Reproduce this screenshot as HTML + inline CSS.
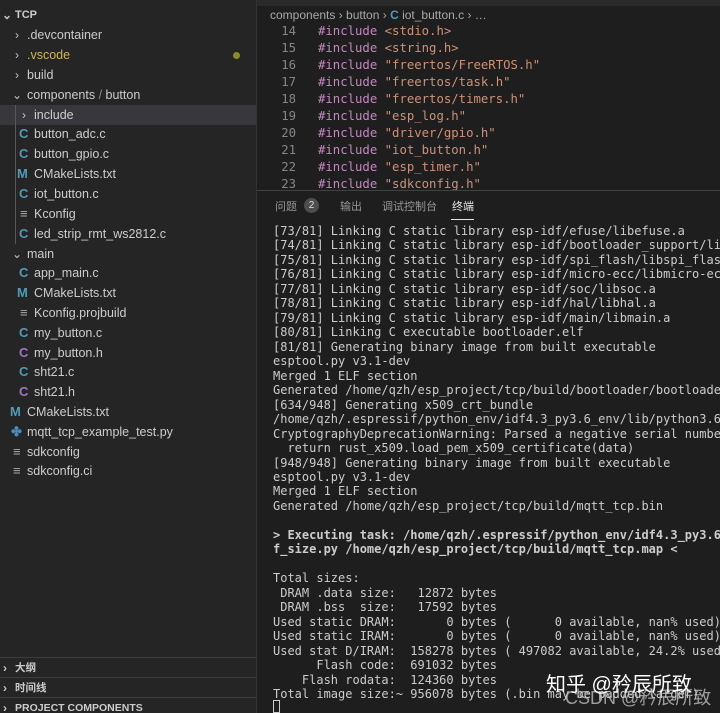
<!DOCTYPE html>
<html><head><meta charset="utf-8">
<style>
*{margin:0;padding:0;box-sizing:border-box}
html,body{width:720px;height:713px;overflow:hidden}
body{background:#1e1e1e;position:relative;font-family:"Liberation Sans","Noto Sans CJK SC",sans-serif;color:#cccccc}
.abs{position:absolute;white-space:pre}
#side{position:absolute;left:0;top:0;width:256px;height:713px;background:#252526;overflow:hidden}
.row{position:absolute;left:0;width:256px;height:20px;font-size:12.5px;line-height:20px;white-space:pre}
.ic{position:absolute;font-weight:bold;font-size:13px}
.c{color:#519aba}.h{color:#a074c4}.m{color:#519aba}
.chev{position:absolute;color:#c5c5c5;font-size:12px}
.mono{font-family:"DejaVu Sans Mono","Liberation Mono",monospace}
#code .l{position:absolute;font-size:12.3px;line-height:17px;white-space:pre}
.ln{color:#858585;width:40px;text-align:right;left:256px}
.kw{color:#c586c0}.st{color:#ce9178}
#termbox{position:absolute;left:257px;top:224px;width:463px;height:489px;overflow:hidden}
#term{position:absolute;left:16px;top:0;font-size:12px;line-height:14.47px;color:#cccccc;white-space:pre}
.sec{position:absolute;left:0;width:256px;height:20px;border-top:1px solid #3c3c3c;font-size:10.5px;font-weight:bold;line-height:20px;color:#cccccc}
</style></head><body>
<div class="abs" style="left:256px;top:0;width:464px;height:6px;background:#2a2a2a"></div>
<div id="side">
 <div class="row" style="top:5px;font-size:11px;font-weight:bold"><span class="chev" style="left:2px;top:0">⌄</span><span style="position:absolute;left:15px">TCP</span></div>
 <div class="row" style="top:25px"><span class="chev" style="left:15px">›</span><span style="position:absolute;left:27px">.devcontainer</span></div>
 <div class="row" style="top:45px"><span class="chev" style="left:15px">›</span><span style="position:absolute;left:27px;color:#c8b65e">.vscode</span><span style="position:absolute;left:233px;top:7px;width:7px;height:7px;border-radius:50%;background:#8c8a2a"></span></div>
 <div class="row" style="top:65px"><span class="chev" style="left:15px">›</span><span style="position:absolute;left:27px">build</span></div>
 <div class="row" style="top:85px"><span class="chev" style="left:12px">⌄</span><span style="position:absolute;left:27px">components<span style="color:#888"> / </span>button</span></div>
 <div class="row" style="top:105px;background:#37373d"><span class="chev" style="left:22px">›</span><span style="position:absolute;left:34px">include</span></div>
 <div class="row" style="top:124px"><span class="ic c" style="left:19px">C</span><span style="position:absolute;left:34px">button_adc.c</span></div>
 <div class="row" style="top:144px"><span class="ic c" style="left:19px">C</span><span style="position:absolute;left:34px">button_gpio.c</span></div>
 <div class="row" style="top:164px"><span class="ic m" style="left:17px">M</span><span style="position:absolute;left:34px">CMakeLists.txt</span></div>
 <div class="row" style="top:184px"><span class="ic c" style="left:19px">C</span><span style="position:absolute;left:34px">iot_button.c</span></div>
 <div class="row" style="top:204px"><span class="ic" style="left:20px;color:#aaa;font-weight:normal">≡</span><span style="position:absolute;left:34px">Kconfig</span></div>
 <div class="row" style="top:224px"><span class="ic c" style="left:19px">C</span><span style="position:absolute;left:34px">led_strip_rmt_ws2812.c</span></div>
 <div class="abs" style="left:15px;top:105px;width:1px;height:139px;background:#585858"></div>
 <div class="row" style="top:244px"><span class="chev" style="left:12px">⌄</span><span style="position:absolute;left:27px">main</span></div>
 <div class="row" style="top:263px"><span class="ic c" style="left:19px">C</span><span style="position:absolute;left:34px">app_main.c</span></div>
 <div class="row" style="top:283px"><span class="ic m" style="left:17px">M</span><span style="position:absolute;left:34px">CMakeLists.txt</span></div>
 <div class="row" style="top:303px"><span class="ic" style="left:20px;color:#aaa;font-weight:normal">≡</span><span style="position:absolute;left:34px">Kconfig.projbuild</span></div>
 <div class="row" style="top:323px"><span class="ic c" style="left:19px">C</span><span style="position:absolute;left:34px">my_button.c</span></div>
 <div class="row" style="top:343px"><span class="ic h" style="left:19px">C</span><span style="position:absolute;left:34px">my_button.h</span></div>
 <div class="row" style="top:362px"><span class="ic c" style="left:19px">C</span><span style="position:absolute;left:34px">sht21.c</span></div>
 <div class="row" style="top:382px"><span class="ic h" style="left:19px">C</span><span style="position:absolute;left:34px">sht21.h</span></div>
 <div class="row" style="top:402px"><span class="ic m" style="left:10px">M</span><span style="position:absolute;left:27px">CMakeLists.txt</span></div>
 <div class="row" style="top:422px"><span class="ic" style="left:11px;color:#4b8bbe">✤</span><span style="position:absolute;left:27px">mqtt_tcp_example_test.py</span></div>
 <div class="row" style="top:442px"><span class="ic" style="left:13px;color:#aaa;font-weight:normal">≡</span><span style="position:absolute;left:27px">sdkconfig</span></div>
 <div class="row" style="top:461px"><span class="ic" style="left:13px;color:#aaa;font-weight:normal">≡</span><span style="position:absolute;left:27px">sdkconfig.ci</span></div>
 <div class="sec" style="top:657px"><span class="chev" style="left:3px">›</span><span style="position:absolute;left:15px">大纲</span></div>
 <div class="sec" style="top:677px"><span class="chev" style="left:3px">›</span><span style="position:absolute;left:15px">时间线</span></div>
 <div class="sec" style="top:697px"><span class="chev" style="left:3px">›</span><span style="position:absolute;left:15px">PROJECT COMPONENTS</span></div>
</div>
<div class="abs" style="left:256px;top:0;width:1px;height:713px;background:#333"></div>
<div class="abs" style="left:270px;top:8px;font-size:12px;color:#a9a9a9">components › button › <b style="color:#519aba">C</b> iot_button.c › …</div>
<div id="code">
 <div class="l mono ln" style="top:23px">14</div><div class="l mono" style="left:318px;top:23px"><span class="kw">#include</span> <span class="st">&lt;stdio.h&gt;</span></div>
 <div class="l mono ln" style="top:40px">15</div><div class="l mono" style="left:318px;top:40px"><span class="kw">#include</span> <span class="st">&lt;string.h&gt;</span></div>
 <div class="l mono ln" style="top:57px">16</div><div class="l mono" style="left:318px;top:57px"><span class="kw">#include</span> <span class="st">"freertos/FreeRTOS.h"</span></div>
 <div class="l mono ln" style="top:74px">17</div><div class="l mono" style="left:318px;top:74px"><span class="kw">#include</span> <span class="st">"freertos/task.h"</span></div>
 <div class="l mono ln" style="top:91px">18</div><div class="l mono" style="left:318px;top:91px"><span class="kw">#include</span> <span class="st">"freertos/timers.h"</span></div>
 <div class="l mono ln" style="top:108px">19</div><div class="l mono" style="left:318px;top:108px"><span class="kw">#include</span> <span class="st">"esp_log.h"</span></div>
 <div class="l mono ln" style="top:125px">20</div><div class="l mono" style="left:318px;top:125px"><span class="kw">#include</span> <span class="st">"driver/gpio.h"</span></div>
 <div class="l mono ln" style="top:142px">21</div><div class="l mono" style="left:318px;top:142px"><span class="kw">#include</span> <span class="st">"iot_button.h"</span></div>
 <div class="l mono ln" style="top:159px">22</div><div class="l mono" style="left:318px;top:159px"><span class="kw">#include</span> <span class="st">"esp_timer.h"</span></div>
 <div class="l mono ln" style="top:176px">23</div><div class="l mono" style="left:318px;top:176px"><span class="kw">#include</span> <span class="st">"sdkconfig.h"</span></div>
</div>
<div class="abs" style="left:257px;top:190px;width:463px;height:523px;background:#1e1e1e;border-top:1px solid #414141"></div>
<div class="abs" style="left:275px;top:198px;font-size:11px;color:#969696">问题</div>
<div class="abs" style="left:304px;top:198px;width:15px;height:15px;border-radius:50%;background:#4d4d4d;color:#ddd;font-size:10px;text-align:center;line-height:15px">2</div>
<div class="abs" style="left:340px;top:198px;font-size:11px;color:#969696">输出</div>
<div class="abs" style="left:382px;top:198px;font-size:11px;color:#969696">调试控制台</div>
<div class="abs" style="left:452px;top:198px;font-size:11px;color:#e7e7e7">终端</div>
<div class="abs" style="left:451px;top:219px;width:23px;height:1px;background:#e7e7e7"></div>
<div id="termbox"><div id="term" class="mono">[73/81] Linking C static library esp-idf/efuse/libefuse.a
[74/81] Linking C static library esp-idf/bootloader_support/lib
[75/81] Linking C static library esp-idf/spi_flash/libspi_flash
[76/81] Linking C static library esp-idf/micro-ecc/libmicro-ecc
[77/81] Linking C static library esp-idf/soc/libsoc.a
[78/81] Linking C static library esp-idf/hal/libhal.a
[79/81] Linking C static library esp-idf/main/libmain.a
[80/81] Linking C executable bootloader.elf
[81/81] Generating binary image from built executable
esptool.py v3.1-dev
Merged 1 ELF section
Generated /home/qzh/esp_project/tcp/build/bootloader/bootloade
[634/948] Generating x509_crt_bundle
/home/qzh/.espressif/python_env/idf4.3_py3.6_env/lib/python3.6
CryptographyDeprecationWarning: Parsed a negative serial numbe
  return rust_x509.load_pem_x509_certificate(data)
[948/948] Generating binary image from built executable
esptool.py v3.1-dev
Merged 1 ELF section
Generated /home/qzh/esp_project/tcp/build/mqtt_tcp.bin

<b>&gt; Executing task: /home/qzh/.espressif/python_env/idf4.3_py3.6
f_size.py /home/qzh/esp_project/tcp/build/mqtt_tcp.map &lt;</b>

Total sizes:
 DRAM .data size:   12872 bytes
 DRAM .bss  size:   17592 bytes
Used static DRAM:       0 bytes (      0 available, nan% used)
Used static IRAM:       0 bytes (      0 available, nan% used)
Used stat D/IRAM:  158278 bytes ( 497082 available, 24.2% used
      Flash code:  691032 bytes
    Flash rodata:  124360 bytes
Total image size:~ 956078 bytes (.bin may be padded larger)
</div></div>
<div class="abs" style="left:273px;top:700px;width:7px;height:13px;border:1px solid #ccc"></div>
<div class="abs" style="left:565px;top:684px;font-size:18px;color:rgba(200,200,200,0.75)">CSDN @矜辰所致</div>
<div class="abs" style="left:546px;top:668px;font-size:20px;color:#fff">知乎 @矜辰所致</div>
</body></html>
